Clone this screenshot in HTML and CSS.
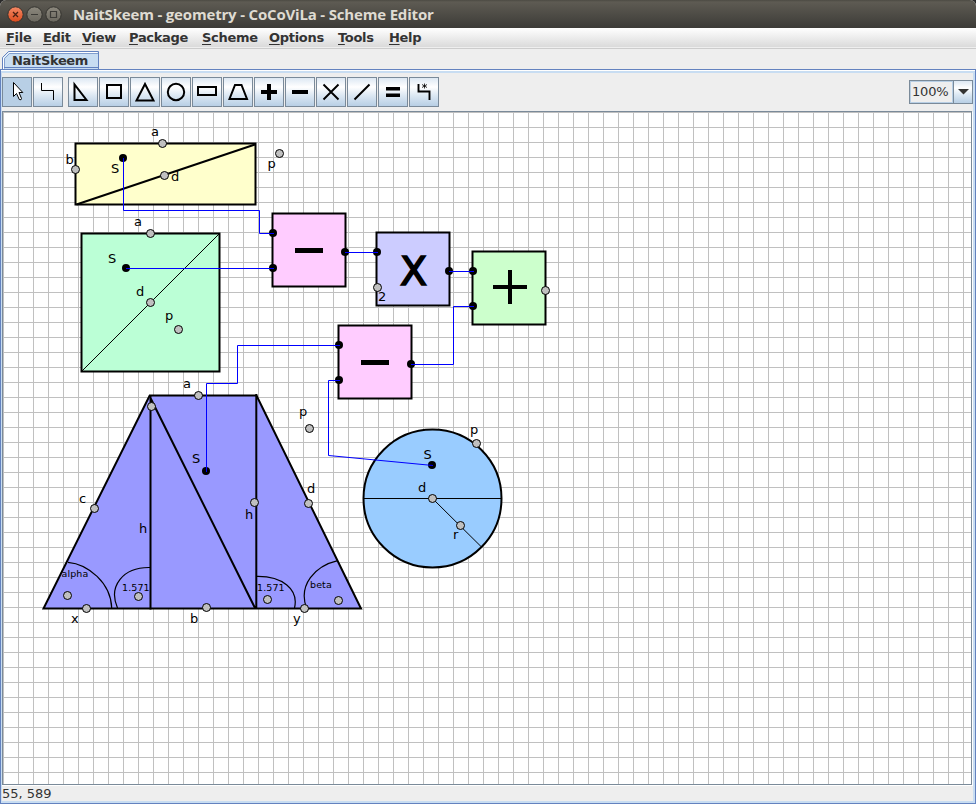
FILE: index.html
```html
<!DOCTYPE html>
<html lang="en">
<head>
<meta charset="utf-8">
<title>NaitSkeem - geometry - CoCoViLa - Scheme Editor</title>
<link rel="stylesheet" href="styles.css">
</head>
<body>
<div class="window">
  <header class="titlebar">
    <svg class="controls" width="60" height="28" viewBox="0 0 60 28">
      <defs>
        <linearGradient id="close" x1="0" y1="0" x2="0" y2="1"><stop offset="0" stop-color="#f58a66"/><stop offset="1" stop-color="#dc4a1c"/></linearGradient>
        <linearGradient id="plain" x1="0" y1="0" x2="0" y2="1"><stop offset="0" stop-color="#8d897e"/><stop offset="1" stop-color="#6a675e"/></linearGradient>
      </defs>
      <g stroke="#34332e">
        <circle cx="11.5" cy="14.5" r="7.7" fill="url(#close)"/>
        <circle cx="30.5" cy="14.5" r="7.7" fill="url(#plain)"/>
        <circle cx="49.5" cy="14.5" r="7.7" fill="url(#plain)"/>
      </g>
      <path d="M9 12l5 5M14 12l-5 5" stroke="#4a2013" stroke-width="1.3"/>
      <path d="M27 14.5h7M46.5 11.5h6v6h-6z" fill="none" stroke="#3c3b37" stroke-width="1.2"/>
    </svg>
    <h1 class="title">NaitSkeem - geometry - CoCoViLa - Scheme Editor</h1>
  </header>

  <nav class="menubar">
    <span class="m-file"><u>F</u>ile</span>
    <span class="m-edit"><u>E</u>dit</span>
    <span class="m-view"><u>V</u>iew</span>
    <span class="m-package"><u>P</u>ackage</span>
    <span class="m-scheme"><u>S</u>cheme</span>
    <span class="m-options"><u>O</u>ptions</span>
    <span class="m-tools"><u>T</u>ools</span>
    <span class="m-help"><u>H</u>elp</span>
  </nav>

  <div class="tabs">
    <svg class="tab" width="98" height="19" viewBox="0 0 98 19">
      <path d="M.5 19V6.500L6.500 .5H96.500V19" fill="#c8ddf2" stroke="#6382bf"/>
      <path d="M1.500 18V7L7 1.500H95.500" fill="none" stroke="#fff"/>
      <path d="M2.500 17.500V7.500L7.500 2.500H96" fill="none" stroke="#6382bf" stroke-width=".7"/>
      <path d="M2 16.500H96" stroke="#6382bf"/>
    </svg>
    <span class="tab-label">NaitSkeem</span>
  </div>

  <main class="pane">
    <div class="toolbar">
      <div class="tool active"><svg viewBox="0 0 28 28"><path d="M10.500 4.500V18.500L13.500 15.500L16.300 21.500Q18.500 22.500 18.500 20.500L16 14.500H19.800Z" fill="#fff" stroke="#000"/></svg></div>
      <div class="tool"><svg viewBox="0 0 28 28"><path d="M7.500 5V12.500H19.500V22"/></svg></div>
      <i class="gap"></i>
      <div class="tool"><svg viewBox="0 0 28 28"><path class="bold" d="M5.500 6.500V22H17.500Z"/></svg></div>
      <div class="tool"><svg viewBox="0 0 28 28"><path class="bold" d="M7 7h14v13H7z"/></svg></div>
      <div class="tool"><svg viewBox="0 0 28 28"><path class="bold" d="M14 6L5.500 22.500H22.500Z"/></svg></div>
      <div class="tool"><svg viewBox="0 0 28 28"><circle class="bold" cx="14" cy="14" r="8.200"/></svg></div>
      <div class="tool"><svg viewBox="0 0 28 28"><path class="bold" d="M5 9h18v8H5z"/></svg></div>
      <div class="tool"><svg viewBox="0 0 28 28"><path class="bold" d="M11 7H17.500L23 21H5.500Z"/></svg></div>
      <div class="tool"><svg viewBox="0 0 28 28"><path class="heavy" d="M6 14H22M14 6V22"/></svg></div>
      <div class="tool"><svg viewBox="0 0 28 28"><path class="heavy" d="M6 14H22"/></svg></div>
      <div class="tool"><svg viewBox="0 0 28 28"><path class="mid" d="M6.500 6.500L21.500 21.500M21.500 6.500L6.500 21.500"/></svg></div>
      <div class="tool"><svg viewBox="0 0 28 28"><path class="mid" d="M21.500 6.500L6.500 21.500"/></svg></div>
      <div class="tool"><svg viewBox="0 0 28 28"><path class="fill" d="M7 9h14v3.500H7zM7 15.500h14v3.500H7z"/></svg></div>
      <div class="tool"><svg viewBox="0 0 28 28"><path class="mid" d="M8.500 6V13.500H19.500V22"/><path d="M14.500 5.500v5M12 6.500l5 3M17 6.500l-5 3" stroke-width=".8"/></svg></div>
      <div class="zoom">
        <span class="zoom-value">100%</span>
        <span class="zoom-arrow"><svg width="11" height="6" viewBox="0 0 11 6"><path d="M0 0H11L5.500 5.500Z" fill="#333"/></svg></span>
      </div>
    </div>

    <svg class="scheme" width="968" height="672" viewBox="3 112 968 672">
      <defs>
        <pattern id="grid" x="3" y="112" width="15" height="15" patternUnits="userSpaceOnUse"><path d="M0 .5H15M.5 0V15" stroke="#c0c0c0"/></pattern>
      </defs>
      <rect x="3" y="112" width="968" height="672" fill="#fff"/>
      <rect x="3" y="112" width="968" height="672" fill="url(#grid)"/>

      <g class="shapes">
        <rect x="75.500" y="143.500" width="180" height="61" fill="#ffffcc"/>
        <path d="M76.500 204.500L255 144.500"/>
        <rect x="81.500" y="233.500" width="138" height="138" fill="#bbffd6"/>
        <path class="thin" d="M82 371L219 234"/>
        <rect x="272.500" y="213.500" width="73" height="73" fill="#ffccff"/>
        <rect x="338.500" y="325.500" width="73" height="73" fill="#ffccff"/>
        <rect x="376.500" y="232.500" width="73" height="73" fill="#ccccff"/>
        <rect x="472.500" y="251.500" width="73" height="73" fill="#ccffcc"/>
        <path d="M149.700 395.500H256.500L361 608.500H43.500Z" fill="#9999ff"/>
        <path d="M150.500 396V609.500M256.300 394V609M150.500 398L255 608"/>
        <path class="arc" d="M68 562.300C88 564 111 583 111.700 608M150 567.500C123 567 108 586 117.500 608M257 576.300C282 576 299 589 294.500 608M337.700 560.700C315 566 298 585 306.500 608"/>
        <circle cx="432.500" cy="498.500" r="69" fill="#99ccff"/>
        <path class="thin" d="M364 498.500H501M432.500 498.500L481 546.500"/>
      </g>

      <g class="signs">
        <path d="M295 250.500H323M361 362.500H389" stroke-width="5"/>
        <path d="M493 287H527M510 270V304" stroke-width="4"/>
        <text x="413.500" y="284.500" text-anchor="middle">X</text>
      </g>

      <g class="ports">
        <circle cx="162.500" cy="143.500" r="4"/><circle cx="75.500" cy="169.500" r="4"/><circle cx="164.500" cy="175.500" r="4"/><circle cx="279.500" cy="153.500" r="4"/>
        <circle cx="150.500" cy="233.500" r="4"/><circle cx="150.500" cy="302.500" r="4"/><circle cx="178.500" cy="329.500" r="4"/>
        <circle cx="377.500" cy="287.500" r="4"/><circle cx="545.500" cy="290.500" r="4"/>
        <circle cx="198.500" cy="395.500" r="4"/><circle cx="151.500" cy="406.500" r="4"/><circle cx="94.500" cy="508.500" r="4"/><circle cx="67.500" cy="595.500" r="4"/><circle cx="138.500" cy="596.500" r="4"/><circle cx="86.500" cy="608.500" r="4"/><circle cx="206.500" cy="607.500" r="4"/><circle cx="254.500" cy="502.500" r="4"/><circle cx="267.500" cy="599.500" r="4"/><circle cx="304.500" cy="608.500" r="4"/><circle cx="338.500" cy="600.500" r="4"/><circle cx="308.500" cy="503.500" r="4"/><circle cx="309.500" cy="428.500" r="4"/>
        <circle cx="476.500" cy="443.500" r="4"/><circle cx="432.500" cy="498.500" r="4"/><circle cx="460.500" cy="525.500" r="4"/>
      </g>
      <g>
        <circle cx="123" cy="158" r="4"/><circle cx="126" cy="268" r="4"/><circle cx="273" cy="233" r="4"/><circle cx="273" cy="268" r="4"/><circle cx="345" cy="252" r="4"/>
        <circle cx="377" cy="252" r="4"/><circle cx="449" cy="271" r="4"/><circle cx="473" cy="271" r="4"/><circle cx="473" cy="306" r="4"/>
        <circle cx="339" cy="345" r="4"/><circle cx="339" cy="380" r="4"/><circle cx="411" cy="364" r="4"/><circle cx="206" cy="471" r="4"/><circle cx="432" cy="465" r="4"/>
      </g>

      <path class="wires" d="M123.500 158V210.500H259.500V233.500H274M126 268.500H274M345 252.500H378M449 271.500H474M411 364.500H453.500V306.500H474M206.500 472V383.500H237.500V345.500H340M340 380.500H328.500V455.500L433 465.500"/>

      <g class="labels">
        <text x="151" y="136">a</text><text x="65.500" y="164">b</text><text x="111" y="173">S</text><text x="171" y="181">d</text><text x="267.500" y="168">p</text>
        <text x="134" y="226">a</text><text x="108" y="263">S</text><text x="136" y="296">d</text><text x="165" y="320">p</text><text x="378" y="301">2</text>
        <text x="183" y="388">a</text><text x="192" y="463">S</text><text x="79" y="503">c</text><text x="139" y="533">h</text><text x="245" y="519">h</text><text x="307" y="493">d</text><text x="299" y="416">p</text>
        <text x="71" y="623">x</text><text x="190" y="623">b</text><text x="293" y="623">y</text>
        <text x="470" y="434">p</text><text x="423.500" y="459">S</text><text x="418" y="492">d</text><text x="453" y="539">r</text>
        <g class="small"><text x="61.500" y="577">alpha</text><text x="122" y="591">1.571</text><text x="257" y="591">1.571</text><text x="310" y="588">beta</text></g>
      </g>
    </svg>

    <footer class="status">55, 589</footer>
  </main>
</div>
</body>
</html>
```
FILE: styles.css
```css
* { box-sizing: border-box; }

body {
  margin: 0;
  background: #2a2a2a;
  font: 13px "DejaVu Sans", sans-serif;
  color: #333;
}

.window {
  width: 976px;
  height: 804px;
  display: flex;
  flex-direction: column;
  background: #eee;
  border-radius: 6px 6px 0 0;
  overflow: hidden;
}

.titlebar {
  height: 28px;
  flex: none;
  display: flex;
  padding-left: 4px;
  background: linear-gradient(#4c4a43 0, #5e5b53 2px, #3c3b37 100%);
}

.controls { flex: none; }

.title {
  margin: 0 0 0 9px;
  font: bold 15px/29px "Open Sans", sans-serif;
  letter-spacing: -0.18px;
  color: #dfdbd2;
  white-space: nowrap;
}

.menubar {
  height: 21px;
  flex: none;
  display: flex;
  padding-left: 6px;
  font-weight: bold;
  letter-spacing: -0.3px;
  line-height: 19px;
  background: linear-gradient(#fff, #dadada 19px, #eee 19px, #eee 20px, #ccc 20px);
}

.menubar u { text-underline-offset: 2px; text-decoration-thickness: 1px; text-decoration-skip-ink: none; }

.m-file { width: 37px; }
.m-edit { width: 39px; }
.m-view { width: 47px; }
.m-package { width: 73px; }
.m-scheme { width: 67px; }
.m-options { width: 69px; }
.m-tools { width: 51px; }

.tabs {
  height: 20px;
  flex: none;
  display: grid;
  padding: 2px 0 0 2px;
}

.tab, .tab-label { grid-area: 1 / 1; }

.tab-label {
  padding-left: 10px;
  font-weight: bold;
  letter-spacing: -0.35px;
  line-height: 19px;
}

.pane {
  height: 735px;
  flex: none;
  display: flex;
  flex-direction: column;
  border: 1px solid #6382bf;
  box-shadow: inset 0 1px #fff, inset 0 3px #c8ddf2, inset 1px 0 #c8ddf2, inset -2px -2px #c8ddf2;
}

.toolbar {
  height: 41px;
  flex: none;
  display: flex;
  align-items: center;
  gap: 1px;
  margin: 0 2px 0 1px;
  padding-top: 3px;
}

.tool {
  width: 30px;
  height: 30px;
  border: 1px solid #7a8a99;
  background: linear-gradient(#dde8f3 0, #fff 32%, #dce8f3 62%, #b8cfe5 100%);
}

.tool.active { background: #b8cfe5; }
.tool svg { display: block; width: 28px; height: 28px; fill: none; stroke: #000; }
.tool .mid { stroke-width: 1.9; }
.tool .bold { stroke-width: 2; }
.tool .heavy { stroke-width: 4; }
.tool .fill { fill: #000; stroke: none; }
.gap { width: 3px; }

.zoom {
  width: 64px;
  height: 24px;
  display: flex;
  margin-left: auto;
  border: 1px solid #7a8a99;
}

.zoom-value {
  width: 43px;
  padding-left: 1px;
  border: 1px solid #b8cfe5;
  letter-spacing: -0.15px;
  line-height: 20px;
}

.zoom-arrow {
  flex: 1;
  display: flex;
  align-items: center;
  justify-content: center;
  border-left: 1px solid #7a8a99;
  background: linear-gradient(#dde8f3, #fff 32%, #dce8f3 62%, #b8cfe5);
}

.scheme {
  flex: none;
  box-sizing: content-box;
  margin-left: 1px;
  border: 1px solid #7a8a99;
  box-shadow: 1px 1px #fff;
  width: 968px;
  height: 672px;
}

.shapes { stroke: #000; stroke-width: 2; fill: none; }
.shapes .thin { stroke-width: 1; }
.shapes .arc { stroke-width: 1.2; }
.signs { stroke: #000; }
.signs text { font: 39.5px "DejaVu Sans", sans-serif; fill: #000; stroke-width: 1.6; }
.ports { fill: #c0c0c0; stroke: #000; stroke-width: 1; }
.wires { fill: none; stroke: #00f; stroke-width: 1; }
.labels { font: 13px "DejaVu Sans", sans-serif; fill: #000; }
.labels .small { font-size: 9.5px; letter-spacing: 0.1px; }

.status {
  flex: 1;
  margin: 0 2px 2px 1px;
  border-top: 1px solid #fff;
  line-height: 15px;
}
```
